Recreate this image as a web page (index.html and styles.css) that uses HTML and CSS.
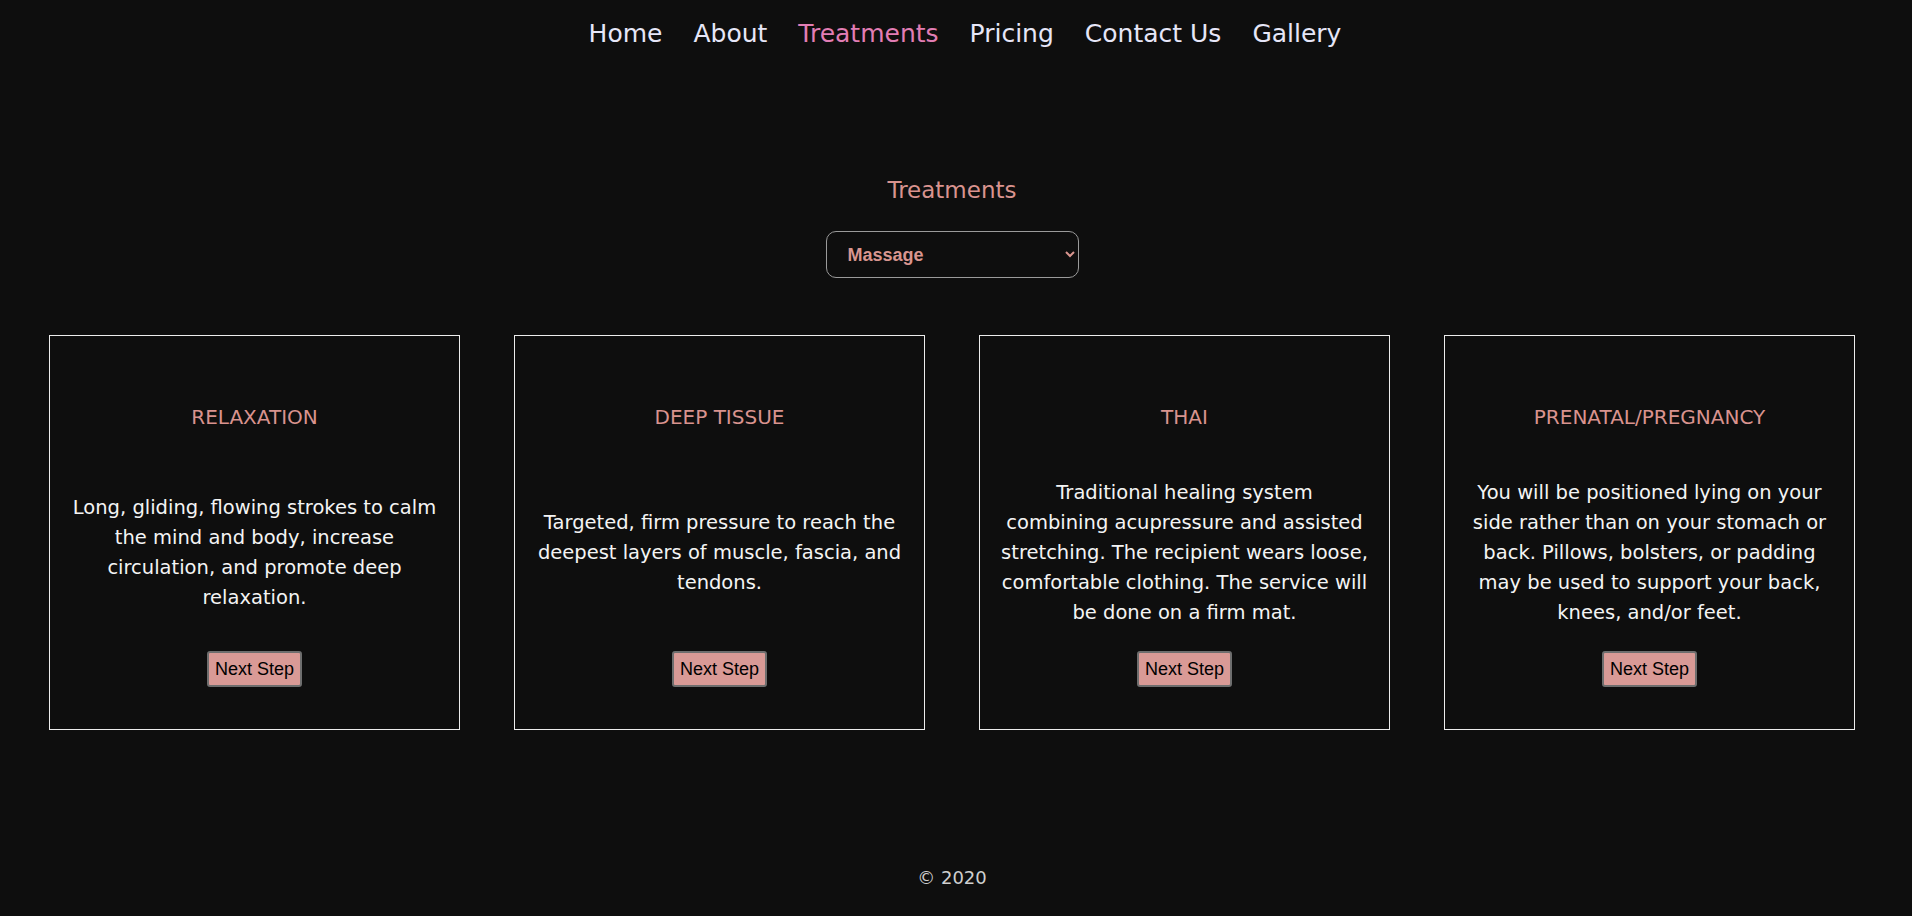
FILE: index.html
```html
<!DOCTYPE html>
<html lang="en">
<head>
<meta charset="utf-8">
<title>Treatments</title>
<link rel="stylesheet" href="styles.css">
</head>
<body>
<div class="page">
  <nav class="nav">
    <a class="nav-link" href="#">Home</a>
    <a class="nav-link" href="#">About</a>
    <a class="nav-link active" href="#">Treatments</a>
    <a class="nav-link" href="#">Pricing</a>
    <a class="nav-link" href="#">Contact Us</a>
    <a class="nav-link" href="#">Gallery</a>
  </nav>

  <main class="main">
    <h1 class="heading">Treatments</h1>
    <div class="select-wrap">
      <select class="select">
        <option>Massage</option>
        <option>Facial</option>
        <option>Body Wrap</option>
      </select>
    </div>

    <section class="cards">
      <article class="card">
        <h2 class="card-title">RELAXATION</h2>
        <div class="card-body"><p class="card-text">Long, gliding, flowing strokes to calm<br>the mind and body, increase<br>circulation, and promote deep<br>relaxation.</p></div>
        <button class="btn" type="button">Next Step</button>
      </article>
      <article class="card">
        <h2 class="card-title">DEEP TISSUE</h2>
        <div class="card-body"><p class="card-text">Targeted, firm pressure to reach the<br>deepest layers of muscle, fascia, and<br>tendons.</p></div>
        <button class="btn" type="button">Next Step</button>
      </article>
      <article class="card">
        <h2 class="card-title">THAI</h2>
        <div class="card-body"><p class="card-text">Traditional healing system<br>combining acupressure and assisted<br>stretching. The recipient wears loose,<br>comfortable clothing. The service will<br>be done on a firm mat.</p></div>
        <button class="btn" type="button">Next Step</button>
      </article>
      <article class="card">
        <h2 class="card-title">PRENATAL/PREGNANCY</h2>
        <div class="card-body"><p class="card-text">You will be positioned lying on your<br>side rather than on your stomach or<br>back. Pillows, bolsters, or padding<br>may be used to support your back,<br>knees, and/or feet.</p></div>
        <button class="btn" type="button">Next Step</button>
      </article>
    </section>
  </main>

  <footer class="footer">© 2020</footer>
</div>
</body>
</html>
```

FILE: styles.css
```css
html {
  background: #0e0e0e;
}
body {
  margin: 0;
  background: #0e0e0e;
  font-family: "DejaVu Sans", "Noto Sans", sans-serif;
  color: #f2f2f2;
}
.page {
  width: 1904px;
}
.nav {
  display: flex;
  justify-content: center;
  gap: 31px;
  padding: 19px 0 0 26px;
  font-size: 25px;
  line-height: 30px;
}
.nav-link {
  color: #e6e6f8;
  text-decoration: none;
}
.nav-link.active {
  color: #e27db4;
}
.main {
  display: flex;
  flex-direction: column;
  align-items: center;
}
.heading {
  margin: 127px 0 0;
  font-size: 23px;
  line-height: 28px;
  font-weight: normal;
  color: #d9938e;
}
.select-wrap {
  margin-top: 27px;
}
.select {
  width: 253px;
  height: 47px;
  padding: 0 10px 0 17px;
  background-color: #0e0e0e;
  color: #d9958f;
  border: 1px solid #9a9a9a;
  border-radius: 10px;
  font-family: "Liberation Sans", Arial, sans-serif;
  font-size: 18px;
  font-weight: bold;
}
.cards {
  display: flex;
  justify-content: center;
  gap: 54px;
  margin-top: 57px;
  width: 100%;
}
.card {
  box-sizing: border-box;
  width: 411px;
  height: 395px;
  border: 1px solid #ececec;
  padding: 69px 0 42px;
  display: flex;
  flex-direction: column;
  align-items: center;
}
.card-title {
  margin: 0 0 26px;
  font-size: 20px;
  line-height: 24px;
  font-weight: normal;
  color: #d9938e;
}
.card-body {
  height: 196px;
  display: flex;
  align-items: center;
  justify-content: center;
}
.card-text {
  margin: 0;
  font-size: 19.5px;
  line-height: 30px;
  text-align: center;
  white-space: nowrap;
  color: #f4f4f4;
}
.btn {
  font-family: "Liberation Sans", Arial, sans-serif;
  font-size: 18px;
  line-height: 22px;
  padding: 5px 6px;
  color: #000;
  background: #d99a96;
  border: 2px solid #6e6e6e;
  border-radius: 3px;
}
.footer {
  margin-top: 137px;
  text-align: center;
  font-size: 18px;
  line-height: 22px;
  color: #cfcfcf;
}
```
